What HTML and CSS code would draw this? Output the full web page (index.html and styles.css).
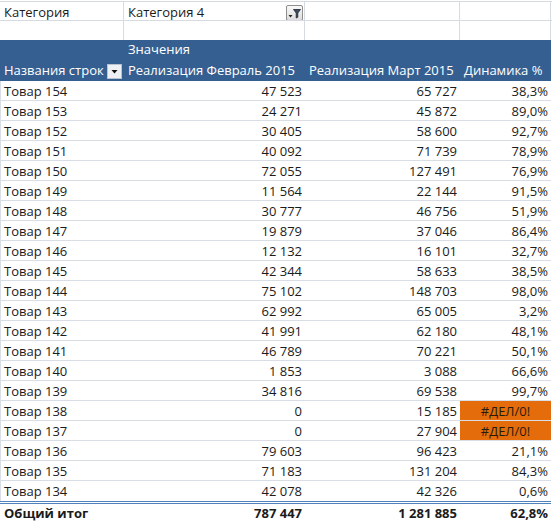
FILE: index.html
```html
<!DOCTYPE html>
<html lang="ru">
<head>
<meta charset="utf-8">
<title>Сводная таблица</title>
<link rel="stylesheet" href="styles.css">
</head>
<body>
<div class="sheet">
  <div class="topline"></div>
  <div class="row grid-row r1">
    <div class="c">Категория</div>
    <div class="c filter-cell"><span>Категория 4</span>
      <svg class="fbtn" width="17" height="16" viewBox="0 0 17 16" aria-hidden="true">
        <defs><linearGradient id="g1" x1="0" y1="0" x2="0" y2="1"><stop offset="0" stop-color="#fafafa"/><stop offset="1" stop-color="#dcdcdc"/></linearGradient></defs>
        <rect x="0.5" y="0.5" width="16" height="15" rx="1.5" fill="url(#g1)" stroke="#8e8e8e"/>
        <polygon points="2.5,10 6.5,10 4.5,12.5" fill="#222"/>
        <path d="M7.5 4.5 H14.5 L11.8 8 V12.2 L10.2 13 V8 Z" fill="#3d4a5c" stroke="#1d2430" stroke-width="0.8" stroke-linejoin="round"/>
      </svg>
    </div>
    <div class="c"></div>
    <div class="c"></div>
  </div>
  <div class="row grid-row r2">
    <div class="c"></div>
    <div class="c"></div>
    <div class="c"></div>
    <div class="c"></div>
  </div>
  <div class="head">
    <div class="row h1">
      <div class="c"></div>
      <div class="c">Значения</div>
      <div class="c"></div>
      <div class="c"></div>
    </div>
    <div class="row h2">
      <div class="c name-head"><span>Названия строк</span>
        <svg class="dbtn" width="15" height="15" viewBox="0 0 15 15" aria-hidden="true">
          <rect x="0.5" y="0.5" width="14" height="14" fill="#eef0f3" stroke="#b9c2cf"/>
          <polygon points="4.5,6 10.5,6 7.5,9.5" fill="#111"/>
        </svg>
      </div>
      <div class="c">Реализация Февраль 2015</div>
      <div class="c">Реализация Март 2015</div>
      <div class="c">Динамика %</div>
    </div>
  </div>
  <div class="body">
    <div class="row d"><div class="c">Товар 154</div><div class="c n">47 523</div><div class="c n">65 727</div><div class="c n">38,3%</div></div>
    <div class="row d"><div class="c">Товар 153</div><div class="c n">24 271</div><div class="c n">45 872</div><div class="c n">89,0%</div></div>
    <div class="row d"><div class="c">Товар 152</div><div class="c n">30 405</div><div class="c n">58 600</div><div class="c n">92,7%</div></div>
    <div class="row d"><div class="c">Товар 151</div><div class="c n">40 092</div><div class="c n">71 739</div><div class="c n">78,9%</div></div>
    <div class="row d"><div class="c">Товар 150</div><div class="c n">72 055</div><div class="c n">127 491</div><div class="c n">76,9%</div></div>
    <div class="row d"><div class="c">Товар 149</div><div class="c n">11 564</div><div class="c n">22 144</div><div class="c n">91,5%</div></div>
    <div class="row d"><div class="c">Товар 148</div><div class="c n">30 777</div><div class="c n">46 756</div><div class="c n">51,9%</div></div>
    <div class="row d"><div class="c">Товар 147</div><div class="c n">19 879</div><div class="c n">37 046</div><div class="c n">86,4%</div></div>
    <div class="row d"><div class="c">Товар 146</div><div class="c n">12 132</div><div class="c n">16 101</div><div class="c n">32,7%</div></div>
    <div class="row d"><div class="c">Товар 145</div><div class="c n">42 344</div><div class="c n">58 633</div><div class="c n">38,5%</div></div>
    <div class="row d"><div class="c">Товар 144</div><div class="c n">75 102</div><div class="c n">148 703</div><div class="c n">98,0%</div></div>
    <div class="row d"><div class="c">Товар 143</div><div class="c n">62 992</div><div class="c n">65 005</div><div class="c n">3,2%</div></div>
    <div class="row d"><div class="c">Товар 142</div><div class="c n">41 991</div><div class="c n">62 180</div><div class="c n">48,1%</div></div>
    <div class="row d"><div class="c">Товар 141</div><div class="c n">46 789</div><div class="c n">70 221</div><div class="c n">50,1%</div></div>
    <div class="row d"><div class="c">Товар 140</div><div class="c n">1 853</div><div class="c n">3 088</div><div class="c n">66,6%</div></div>
    <div class="row d"><div class="c">Товар 139</div><div class="c n">34 816</div><div class="c n">69 538</div><div class="c n">99,7%</div></div>
    <div class="row d"><div class="c">Товар 138</div><div class="c n">0</div><div class="c n">15 185</div><div class="c err">#ДЕЛ/0!</div></div>
    <div class="row d"><div class="c">Товар 137</div><div class="c n">0</div><div class="c n">27 904</div><div class="c err">#ДЕЛ/0!</div></div>
    <div class="row d"><div class="c">Товар 136</div><div class="c n">79 603</div><div class="c n">96 423</div><div class="c n">21,1%</div></div>
    <div class="row d"><div class="c">Товар 135</div><div class="c n">71 183</div><div class="c n">131 204</div><div class="c n">84,3%</div></div>
    <div class="row d last"><div class="c">Товар 134</div><div class="c n">42 078</div><div class="c n">42 326</div><div class="c n">0,6%</div></div>
    <div class="row total"><div class="c">Общий итог</div><div class="c n">787 447</div><div class="c n">1 281 885</div><div class="c n">62,8%</div></div>
  </div>
</div>
</body>
</html>
```
FILE: styles.css
```css
html, body {
  margin: 0;
  padding: 0;
  background: #ffffff;
}

body {
  font-family: "Open Sans", "Noto Sans", "Liberation Sans", sans-serif;
  font-size: 13px;
  color: #1b1b1b;
  width: 554px;
  height: 523px;
  overflow: hidden;
}

.sheet {
  width: 554px;
}

.topline {
  height: 2px;
  box-sizing: border-box;
  border-bottom: 1px solid #d6dbe2;
  width: 552px;
}

.row {
  display: grid;
  grid-template-columns: 124px 181px 155px 91px;
  box-sizing: border-box;
  width: 551px;
}

.c {
  box-sizing: border-box;
  padding: 2px 3px 0 4px;
  line-height: 17px;
  white-space: nowrap;
  overflow: hidden;
}

/* filter area rows */
.grid-row {
  width: 552px;
}
.grid-row .c {
  border-right: 1px solid #d6dbe2;
}
.r1 {
  height: 19px;
  border-bottom: 1px solid #d6dbe2;
}
.r1 .c {
  padding-top: 2px;
}
.r2 {
  height: 19px;
}

.filter-cell {
  display: flex;
  justify-content: space-between;
  align-items: flex-start;
  padding-right: 1px;
}
.fbtn {
  margin-top: 1px;
  flex: none;
}

/* header */
.head {
  background: #365f91;
  color: #ffffff;
  font-weight: 400;
  width: 551px;
}
.h1 {
  height: 20px;
}
.h1 .c {
  padding-top: 1px;
}
.h2 {
  height: 21px;
}
.h2 .c {
  padding-top: 2px;
}
.name-head {
  display: flex;
  justify-content: space-between;
  align-items: flex-start;
  padding-right: 2px;
}
.dbtn {
  flex: none;
  margin-top: 2px;
}

/* body */
.body {
  width: 551px;
}
.d {
  height: 20px;
  border-bottom: 1px solid #d9dee6;
}
.d .c:first-child {
  border-left: 1px solid #d9dee6;
  padding-left: 3px;
}
.d.last {
  border-bottom: none;
}
.n {
  text-align: right;
}
.err {
  background: #e46c0a;
  color: #2a1a0c;
  text-align: center;
  padding-left: 0;
  padding-right: 0;
}
.total {
  height: 22px;
  border-top: 3px double #4f81bd;
  font-weight: 700;
}
.total .c {
  padding-top: 1px;
}
```
